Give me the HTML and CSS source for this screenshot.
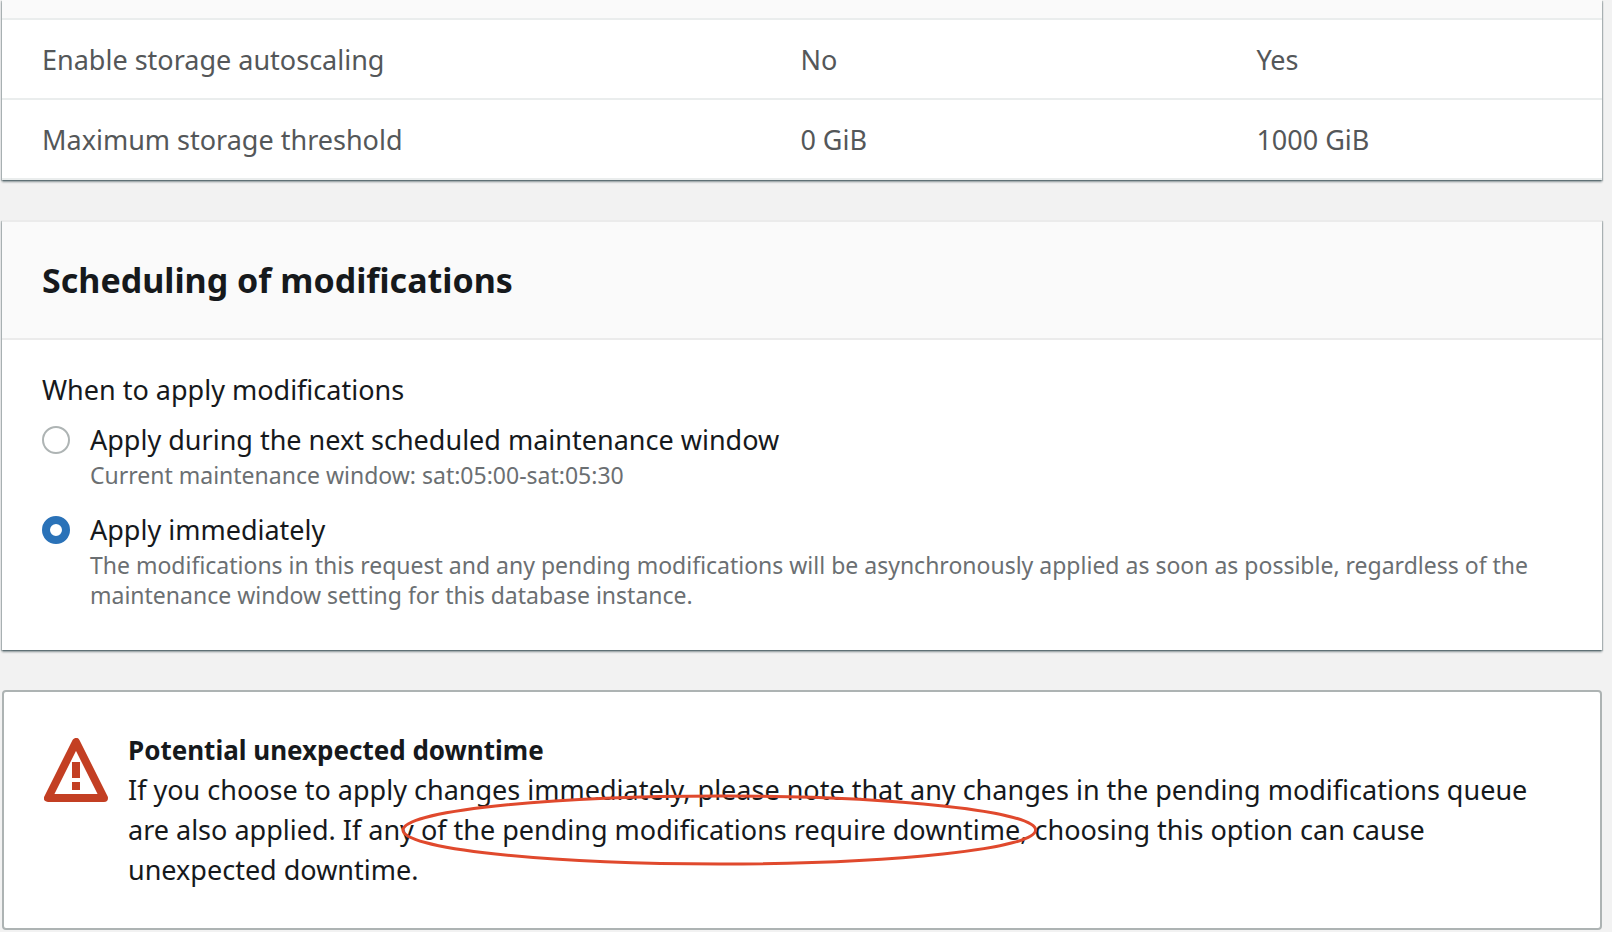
FILE: index.html
```html
<!DOCTYPE html>
<html lang="en">
<head>
    <meta charset="UTF-8">
    <title>Modify DB instance</title>
    <link rel="stylesheet" href="styles.css">
</head>
<body>
<main class="page">
    <section class="panel">
        <div class="panel-strip"></div>
        <table class="summary">
            <tbody>
            <tr>
                <td class="name">Enable storage autoscaling</td>
                <td class="current">No</td>
                <td>Yes</td>
            </tr>
            <tr>
                <td class="name">Maximum storage threshold</td>
                <td class="current">0 GiB</td>
                <td>1000 GiB</td>
            </tr>
            </tbody>
        </table>
    </section>

    <section class="panel schedule">
        <header class="panel-header">
            <h2>Scheduling of modifications</h2>
        </header>
        <fieldset class="panel-body">
            <legend>When to apply modifications</legend>
            <div class="option">
                <input type="radio" name="apply" id="apply-window" aria-describedby="window-desc">
                <div>
                    <label for="apply-window">Apply during the next scheduled maintenance window</label>
                    <p class="desc" id="window-desc">Current maintenance window: sat:05:00-sat:05:30</p>
                </div>
            </div>
            <div class="option">
                <input type="radio" name="apply" id="apply-now" aria-describedby="now-desc" checked>
                <div>
                    <label for="apply-now">Apply immediately</label>
                    <p class="desc" id="now-desc">The modifications in this request and any pending modifications will be asynchronously applied as soon as possible, regardless of the maintenance window setting for this database instance.</p>
                </div>
            </div>
        </fieldset>
    </section>

    <section class="alert">
        <svg class="alert-icon" viewBox="0 0 64 64" width="64" height="64" aria-hidden="true">
            <path d="M32 4 L4 60 H60 Z" fill="none" stroke="#c33f23" stroke-width="8" stroke-linejoin="round"/>
            <path d="M28 24h8v16h-8zM28 44h8v8h-8z" fill="#c33f23"/>
        </svg>
        <div>
            <h3>Potential unexpected downtime</h3>
            <p>If you choose to apply changes immediately, please note that any changes in the pending modifications queue are also applied. If any <span class="circled">of the pending modifications require downtime,<svg class="ring" viewBox="0 0 100 100" preserveAspectRatio="none" aria-hidden="true"><ellipse cx="50" cy="50" rx="50" ry="50"/></svg></span> choosing this option can cause unexpected downtime.</p>
        </div>
    </section>
</main>
</body>
</html>
```
FILE: styles.css
```css
body,h2,h3,p,fieldset,legend{margin:0;padding:0;}
body{background:#f2f2f2;color:#16191c;font:27px/40px "Noto Sans","Open Sans",sans-serif;}
.page{display:flex;flex-direction:column;gap:40px;padding:0 10px 0 2px;}

.panel{background:#fff;box-shadow:0 2px 2px rgba(0,28,36,.4),1px 1px 1px rgba(0,28,36,.2),-1px 1px 1px rgba(0,28,36,.2);}
.panel-strip{height:18px;background:#fafafa;border-bottom:2px solid #eaeded;}
.panel-header{padding:38px 40px;background:#fafafa;border-bottom:2px solid #ebebeb;}
.schedule{border-top:2px solid #ebebeb;}
h2{font-size:34px;line-height:40px;}

/* summary of changes */
.summary{width:100%;table-layout:fixed;border-collapse:separate;border-spacing:0;color:#545759;}
.summary td{padding:20px 40px 18px;border-bottom:2px solid #eaeded;}
.summary .name{width:47.4%;box-sizing:border-box;}
.summary .current{width:28.5%;box-sizing:border-box;}

/* scheduling options */
.panel-body{border:0;padding:30px 40px 40px;}
legend{float:left;width:100%;margin-bottom:10px;}
.option{clear:both;display:flex;gap:20px;}
.option + .option{margin-top:20px;}
.option label{display:block;}
.option input{appearance:none;flex:none;box-sizing:border-box;width:28px;height:28px;margin:6px 0 0;border:2px solid #aeb4b4;border-radius:50%;background:#fff;}
.option input:checked{border:8px solid #2a72b8;}
.desc{color:#6b6f72;font-size:23px;line-height:30px;}

/* downtime warning */
.alert{display:flex;gap:20px;padding:38px 40px;background:#fff;border:2px solid #adb3b3;border-radius:4px;}
.alert-icon{flex:none;margin-top:8px;}
h3{font-size:26px;line-height:40px;}
.circled{position:relative;}
.ring{position:absolute;top:-15px;left:-18px;width:calc(100% + 26px);height:68px;overflow:visible;pointer-events:none;}
.ring ellipse{fill:none;stroke:#e0492d;stroke-width:3px;vector-effect:non-scaling-stroke;}
```
